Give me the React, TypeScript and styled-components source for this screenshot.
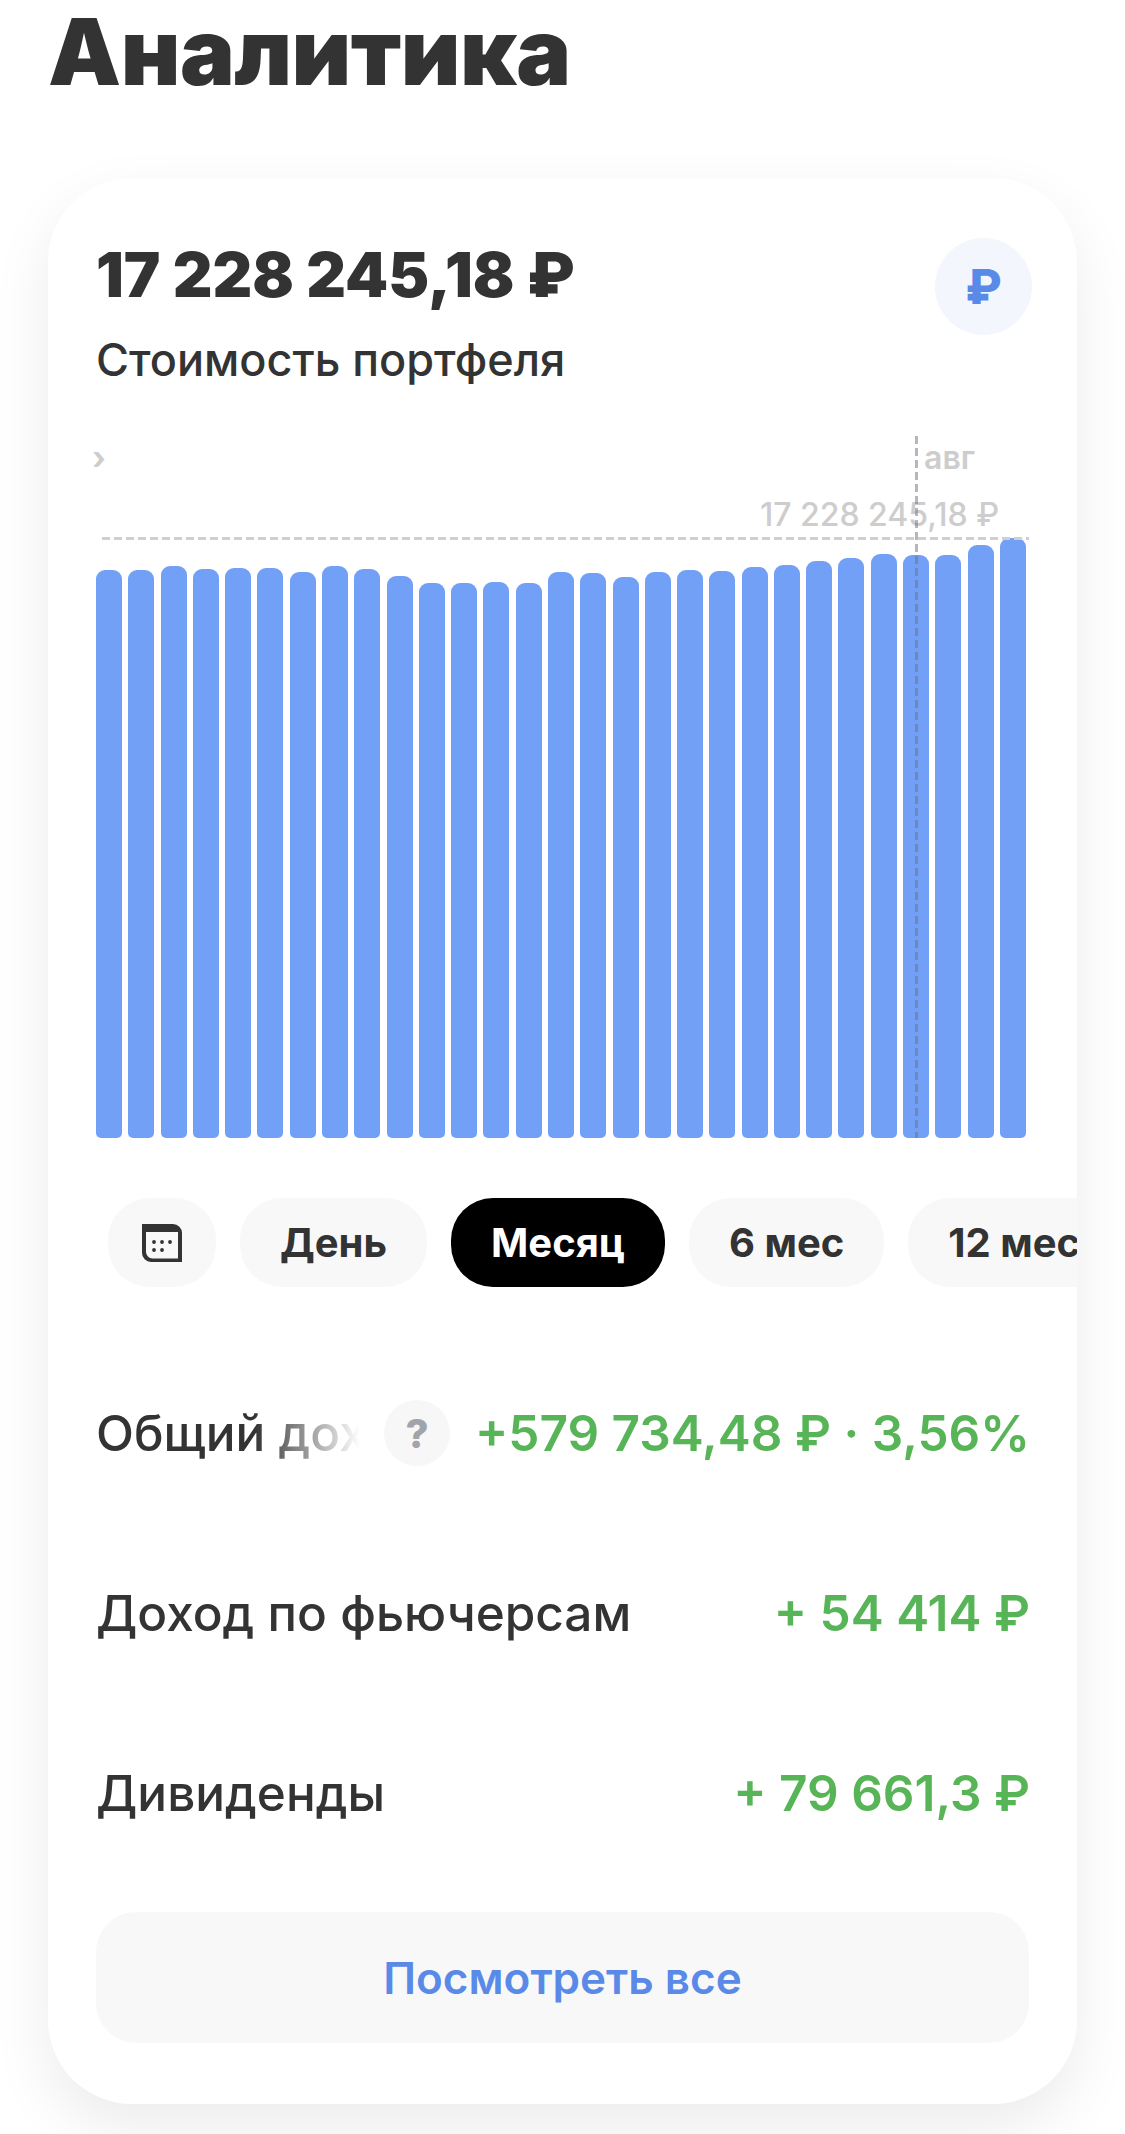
import styled, { createGlobalStyle } from 'styled-components';

const GlobalStyle = createGlobalStyle`
  html, body {
    margin: 0;
    padding: 0;
    background: #fff;
  }
  body {
    width: 1125px;
    height: 2134px;
    overflow: hidden;
    font-family: Inter, 'Liberation Sans', sans-serif;
    color: #333;
  }
`;

const BOTTOM = 1138;
const barTops = [
  570, 570, 566, 569, 568, 568, 572, 566, 569, 576, 583, 583, 582, 583, 572,
  573, 577, 572, 570, 571, 567, 565, 561, 558, 554, 555, 555, 545, 538,
];

const Page = styled.div`
  padding: 0 48px;
  height: 2134px;
  box-sizing: border-box;
`;

const Title = styled.h1`
  margin: 0;
  height: 178px;
  font-size: 92px;
  line-height: 104px;
  font-weight: 900;
  letter-spacing: -0.5px;
`;

const Card = styled.section`
  width: 1029px;
  height: 1926px;
  box-sizing: border-box;
  padding: 60px 48px 0;
  background: #fff;
  border-radius: 84px;
  overflow: hidden;
  box-shadow: 0 24px 60px rgba(0, 0, 0, 0.08);
`;

const Header = styled.div`
  display: flex;
  justify-content: space-between;
  align-items: flex-start;
  height: 198px;
`;

const Balance = styled.div`
  margin-top: 5px;
  font-size: 61.5px;
  line-height: 64px;
  font-weight: 900;
`;

const Subtitle = styled.div`
  margin-top: 28px;
  font-size: 45px;
  line-height: 50px;
  font-weight: 500;
`;

const CurrencyBadge = styled.div`
  width: 97px;
  height: 97px;
  border-radius: 50%;
  margin-right: -3px;
  background: #f3f6fc;
  color: #5a8ae8;
  font-size: 48px;
  font-weight: 800;
  display: flex;
  align-items: center;
  justify-content: center;
`;

const Chart = styled.div`
  position: relative;
  height: 702px;
`;

const Bars = styled.div`
  position: absolute;
  left: 0;
  right: 0;
  bottom: 0;
  display: flex;
  align-items: flex-end;
  gap: 6.29px;
`;

const Bar = styled.div`
  width: 26px;
  flex: none;
  background: #72a0f7;
  border-radius: 9px 9px 5px 5px;
`;

const GuideH = styled.div`
  position: absolute;
  left: 6px;
  right: 0;
  top: 101px;
  height: 3px;
  background: repeating-linear-gradient(90deg, #cfcfcf 0 8px, transparent 8px 12px);
`;

const GuideV = styled.div`
  position: absolute;
  left: 819px;
  top: 0;
  bottom: 0;
  width: 3px;
  background: repeating-linear-gradient(180deg, rgba(110, 110, 125, 0.5) 0 8px, transparent 8px 12px);
`;

const AxisLabel = styled.span`
  position: absolute;
  left: 828px;
  top: 2px;
  font-size: 32px;
  line-height: 40px;
  font-weight: 600;
  color: #cdcdcd;
`;

const AxisStub = styled.span`
  position: absolute;
  left: -4px;
  top: 2px;
  font-size: 32px;
  line-height: 40px;
  font-weight: 700;
  color: #cdcdcd;
`;

const PriceLabel = styled.span`
  position: absolute;
  right: 30px;
  top: 60px;
  font-size: 32px;
  line-height: 38px;
  font-weight: 500;
  color: #cdcdcd;
`;

const Periods = styled.div`
  display: flex;
  gap: 24px;
  margin: 60px -48px 0 12px;
`;

const Pill = styled.div<{ $active?: boolean }>`
  flex: none;
  height: 89px;
  padding: 0 40px;
  border-radius: 42px;
  display: flex;
  align-items: center;
  font-size: 40px;
  font-weight: 700;
  white-space: nowrap;
  background: ${(p) => (p.$active ? '#000' : '#f8f8f8')};
  color: ${(p) => (p.$active ? '#fff' : '#333')};
`;

const IconPill = styled(Pill)`
  width: 108px;
  padding: 0;
  justify-content: center;
`;

const Rows = styled.div`
  margin-top: 113px;
  display: flex;
  flex-direction: column;
  gap: 114px;
`;

const Row = styled.div`
  display: flex;
  align-items: center;
  justify-content: space-between;
  height: 66px;
  font-size: 49.5px;
  font-weight: 500;
  white-space: nowrap;
`;

const FadedLabel = styled.div`
  width: 264px;
  overflow: hidden;
  -webkit-mask-image: linear-gradient(90deg, #000 60%, transparent 100%);
  mask-image: linear-gradient(90deg, #000 60%, transparent 100%);
`;

const HelpBadge = styled.div`
  width: 66px;
  height: 66px;
  margin-left: 24px;
  border-radius: 50%;
  flex: none;
  background: #f7f7f7;
  color: #a2a4ac;
  font-size: 40px;
  font-weight: 800;
  display: flex;
  align-items: center;
  justify-content: center;
`;

const Value = styled.div`
  color: #57b557;
  font-weight: 600;
  margin-left: auto;
  margin-right: -1px;
`;

const ViewAll = styled.button`
  display: block;
  width: 100%;
  height: 131px;
  margin-top: 86px;
  border: none;
  border-radius: 40px;
  background: #f8f8f8;
  color: #5a8ae8;
  font-family: inherit;
  font-size: 44px;
  font-weight: 600;
`;

const CalendarIcon = () => (
  <svg width="40" height="38" viewBox="0 0 40 38">
    <path
      fillRule="evenodd"
      fill="#333"
      d="M0 0H31a9 9 0 0 1 9 9V38H9A9 9 0 0 1 0 29ZM4 8V28a6.5 6.5 0 0 0 6.5 6.5H36V8Z"
    />
    <g fill="#333">
      <circle cx="12" cy="18" r="1.9" />
      <circle cx="20" cy="18" r="1.9" />
      <circle cx="28" cy="18" r="1.9" />
      <circle cx="12" cy="26" r="1.9" />
      <circle cx="20" cy="26" r="1.9" />
    </g>
  </svg>
);

export default function App() {
  return (
    <Page>
      <GlobalStyle />
      <Title>Аналитика</Title>
      <Card>
        <Header>
          <div>
            <Balance>17 228 245,18 ₽</Balance>
            <Subtitle>Стоимость портфеля</Subtitle>
          </div>
          <CurrencyBadge>₽</CurrencyBadge>
        </Header>
        <Chart>
          <AxisStub>›</AxisStub>
          <AxisLabel>авг</AxisLabel>
          <PriceLabel>17 228 245,18 ₽</PriceLabel>
          <Bars>
            {barTops.map((top, i) => (
              <Bar key={i} style={{ height: BOTTOM - top }} />
            ))}
          </Bars>
          <GuideH />
          <GuideV />
        </Chart>
        <Periods>
          <IconPill>
            <CalendarIcon />
          </IconPill>
          <Pill>День</Pill>
          <Pill $active>Месяц</Pill>
          <Pill>6 мес</Pill>
          <Pill>12 мес</Pill>
        </Periods>
        <Rows>
          <Row>
            <FadedLabel>Общий доход</FadedLabel>
            <HelpBadge>?</HelpBadge>
            <Value>+579 734,48 ₽ · 3,56%</Value>
          </Row>
          <Row>
            <span>Доход по фьючерсам</span>
            <Value>+ 54 414 ₽</Value>
          </Row>
          <Row>
            <span>Дивиденды</span>
            <Value>+ 79 661,3 ₽</Value>
          </Row>
        </Rows>
        <ViewAll>Посмотреть все</ViewAll>
      </Card>
    </Page>
  );
}
